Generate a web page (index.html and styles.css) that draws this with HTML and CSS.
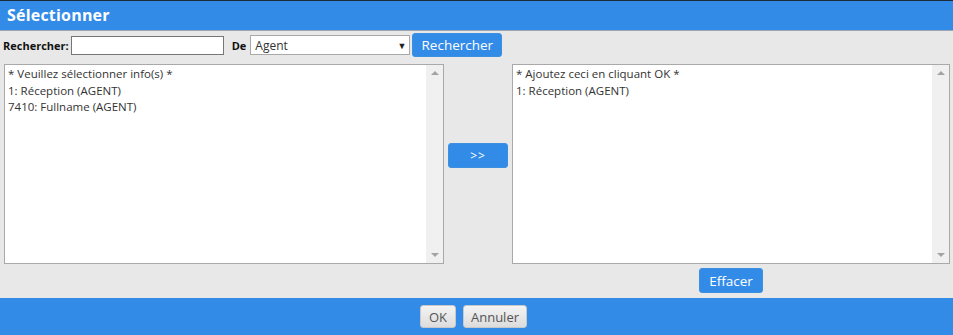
FILE: index.html
```html
<!DOCTYPE html>
<html>

<head>
  <meta charset="utf-8">
  <title>Sélectionner</title>
  <link rel="stylesheet" href="styles.css">
</head>

<body>
	<div class="dialog">
		<div class="title">Sélectionner</div>

		<div class="search">
			<label class="lbl" for="q">Rechercher:</label>
			<input type="text" id="q" class="field">
			<label class="lbl de" for="src">De</label>
			<div class="select" id="src">
				<span>Agent</span>
				<span class="caret">&#9660;</span>
			</div>
			<button type="button" class="butn search-btn">Rechercher</button>
		</div>

		<div class="lists">
			<div class="listbox left">
				<div class="items">
					<div>* Veuillez sélectionner info(s) *</div>
					<div>1: Réception (AGENT)</div>
					<div>7410: Fullname (AGENT)</div>
				</div>
				<div class="scroll">
					<span class="arrow up"></span>
					<span class="arrow down"></span>
				</div>
			</div>

			<div class="middle">
				<button type="button" class="butn move">&gt;&gt;</button>
			</div>

			<div class="right-col">
				<div class="listbox right">
					<div class="items">
						<div>* Ajoutez ceci en cliquant OK *</div>
						<div>1: Réception (AGENT)</div>
					</div>
					<div class="scroll">
						<span class="arrow up"></span>
						<span class="arrow down"></span>
					</div>
				</div>
				<div class="clear-row">
					<button type="button" class="butn clear">Effacer</button>
				</div>
			</div>
		</div>

		<div class="footer">
			<button type="button" class="gbtn ok">OK</button>
			<button type="button" class="gbtn">Annuler</button>
		</div>
	</div>
</body>

</html>
```

FILE: styles.css
```css
body {
	margin: 0;
	background-color: #e8e8e8;
	font-family: "Open Sans", "Noto Sans", sans-serif;
	font-size: 12px;
	color: #222;
}

.dialog {
	width: 953px;
	height: 335px;
	display: flex;
	flex-direction: column;
}

.title {
	height: 29px;
	border-top: 1px solid #1c2a3a;
	border-bottom: 1px solid #9aa6b2;
	background: #338be8;
	color: #fff;
	font-size: 16px;
	font-weight: bold;
	line-height: 29px;
	padding-left: 7px;
	letter-spacing: 0.2px;
}

.search {
	display: flex;
	align-items: center;
	height: 28px;
	padding: 0 4px 1px 3px;
}

.lbl {
	font-weight: bold;
	color: #111;
	font-size: 11px;
	margin-right: 2px;
}

.de {
	margin-left: 8px;
	margin-right: 4px;
}

.field {
	width: 149px;
	height: 15px;
	border: 1px solid #767676;
	padding: 1px;
	margin: 0;
	font-family: inherit;
}

.select {
	width: 151px;
	height: 18px;
	border: 1px solid #a9a9a9;
	background: #fff;
	display: flex;
	align-items: center;
	justify-content: space-between;
	padding: 0 3px 0 4px;
	color: #333;
}

.caret {
	font-size: 9px;
	color: #222;
}

.butn {
	background: #338be8;
	color: #fff;
	border: 1px solid #3d8fe0;
	border-radius: 3px;
	font-family: inherit;
	font-size: 13.5px;
	padding: 0;
}

.search-btn {
	width: 90px;
	height: 24px;
	margin-left: 2px;
}

.lists {
	display: flex;
	padding: 4px 3px 0 4px;
	height: 234px;
}

.listbox {
	display: flex;
	background: #fff;
	border: 1px solid #a9a9a9;
	height: 198px;
}

.left {
	width: 439px;
}

.items {
	flex: 1;
	padding: 1px 3px;
	line-height: 16.5px;
	color: #333;
	font-size: 11.5px;
}

.scroll {
	width: 17px;
	background: #f0f0f0;
	display: flex;
	flex-direction: column;
	justify-content: space-between;
	align-items: center;
	padding: 6px 0;
}

.arrow {
	width: 0;
	height: 0;
	border-left: 4px solid transparent;
	border-right: 4px solid transparent;
}

.up {
	border-bottom: 4px solid #a3a3a3;
}

.down {
	border-top: 4px solid #a3a3a3;
}

.middle {
	width: 68px;
	display: flex;
	justify-content: center;
	align-items: flex-start;
	padding-top: 79px;
}

.move {
	width: 60px;
	height: 25px;
	font-size: 12px;
	letter-spacing: 1px;
}

.right-col {
	display: flex;
	flex-direction: column;
}

.right {
	width: 436px;
}

.clear-row {
	display: flex;
	justify-content: center;
	padding-top: 4px;
}

.clear {
	width: 64px;
	height: 25px;
}

.footer {
	flex: 1;
	background: #338be8;
	display: flex;
	justify-content: center;
	align-items: flex-start;
	gap: 7px;
	padding-top: 7px;
	padding-right: 6px;
}

.gbtn {
	height: 23px;
	border: 1px solid #c8c8c8;
	border-radius: 3px;
	background: linear-gradient(#f4f4f4, #dcdcdc);
	color: #555;
	font-family: inherit;
	font-size: 13px;
	padding: 0;
}

.ok {
	width: 36px;
}

.gbtn:last-child {
	width: 64px;
}
```
